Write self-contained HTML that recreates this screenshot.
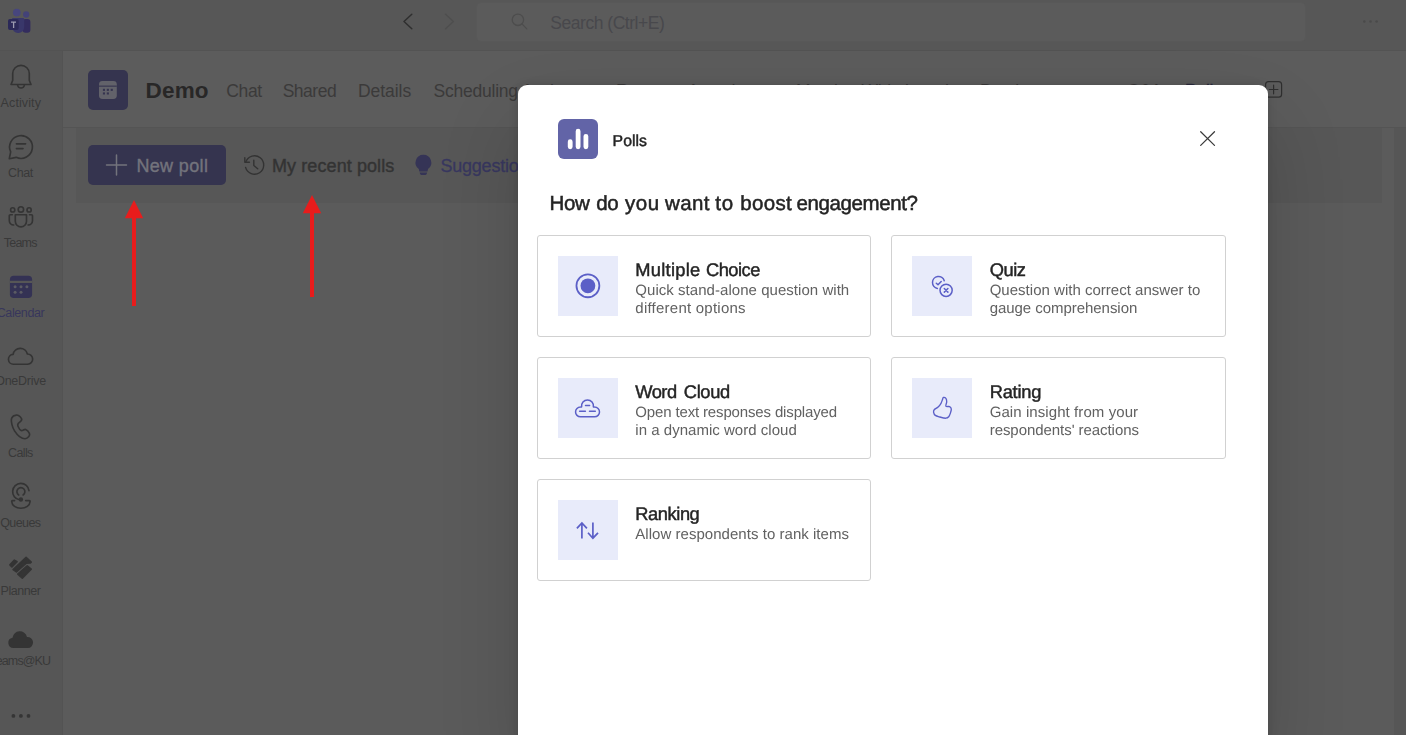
<!DOCTYPE html>
<html>
<head>
<meta charset="utf-8">
<title>Polls</title>
<style>
*{box-sizing:border-box;margin:0;padding:0}
html,body{width:1406px;height:735px;overflow:hidden}
body{position:relative;background:#5b5b5b;font-family:"Liberation Sans",sans-serif;color:#242424}
.abs{position:absolute}
.tx{position:absolute;white-space:nowrap;line-height:1}
svg{position:absolute;overflow:visible}
#topbar{left:0;top:0;width:1406px;height:51px;background:#575757;border-bottom:1px solid #535353}
#search{left:476px;top:2px;width:830px;height:40px;border-radius:5px;background:#5b5b5b;border:1px solid #585858}
#sidebar{left:0;top:51px;width:63px;height:684px;background:#565656;border-right:1px solid #535353}
.nav{position:absolute;left:-79.3px;width:200px;text-align:center;font-size:12.5px;line-height:1;color:#3b3b3b;white-space:nowrap}
#chead{left:63px;top:51px;width:1343px;height:77px;background:#5c5c5c;border-bottom:1px solid #545454}
#tile{left:88px;top:70px;width:40px;height:40px;border-radius:5px;background:#35344f}
#main{left:63px;top:128px;width:1343px;height:607px;background:#5b5b5b}
#strip{left:76px;top:128px;width:1306px;height:75px;background:#575757}
#rgut{left:1394px;top:128px;width:12px;height:607px;background:#565656}
#newpoll{left:88px;top:145px;width:138px;height:40px;border-radius:5px;background:#35344f}
#clip{left:0;top:0;width:518px;height:735px;overflow:hidden}
#modal{left:518px;top:85px;width:750px;height:660px;background:#fff;border-radius:9px;box-shadow:0 0 10px rgba(0,0,0,.13),0 40px 80px rgba(0,0,0,.16)}
.card{position:absolute;width:334px;height:102px;border:1px solid #d1d1d1;border-radius:3px;background:#fff}
.ic{position:absolute;width:60px;height:60px;background:#e8ebfa}
</style>
</head>
<body>
<div class="abs" id="topbar"></div>
<div class="abs" id="search"></div>
<div class="abs" id="sidebar"></div>
<div class="abs" id="chead"></div>
<div class="abs" id="main"></div>
<div class="abs" id="strip"></div>
<div class="abs" id="rgut"></div>
<div class="abs" id="tile"></div>
<div class="abs" id="newpoll"></div>
<svg width="1406" height="735" viewBox="0 0 1406 735" style="left:0;top:0">
<!-- teams logo -->
<g>
 <circle cx="26.200" cy="14.500" r="3.150" fill="#434278"/>
 <rect x="22.500" y="19" width="7.900" height="13.800" rx="3" fill="#332c5e"/>
 <circle cx="16.800" cy="12.600" r="3.850" fill="#47467e"/>
 <path d="M12.200 18.100h10.800a1.200 1.200 0 0 1 1.200 1.200v8a5.700 5.700 0 0 1-5.700 5.700h-.6a5.700 5.700 0 0 1-5.700-5.700z" fill="#39376a"/>
 <rect x="8" y="19" width="10.700" height="11" rx="1.900" fill="#2b2958"/>
 <path d="M11 22.100h5M13.600 22.100v5.800" stroke="#9c9cb0" stroke-width="1.300" fill="none"/>
</g>
<!-- back / forward chevrons -->
<path d="M411.8 14.2L404 21.5l7.8 7.3" stroke="#2f2f2f" stroke-width="1.5" fill="none" stroke-linecap="round" stroke-linejoin="round"/>
<path d="M445.6 14.2l7.8 7.3-7.8 7.3" stroke="#4e4e4e" stroke-width="1.5" fill="none" stroke-linecap="round" stroke-linejoin="round"/>
<!-- search icon -->
<g stroke="#4d4d4d" stroke-width="1.300" fill="none" stroke-linecap="round"><circle cx="517.900" cy="19.800" r="5.700"/><path d="M522 23.900l4.800 5"/></g>
<!-- top right dots -->
<g fill="#4a4a4a"><circle cx="1364.3" cy="21.4" r="1.25"/><circle cx="1370.5" cy="21.4" r="1.25"/><circle cx="1376.6" cy="21.4" r="1.25"/></g>
<!-- add tab icon -->
<g stroke="#2f2f2f" stroke-width="1.2" fill="none" stroke-linecap="round"><rect x="1265.600" y="81.600" width="16" height="15.600" rx="3"/><path d="M1273.6 85.2v8.6M1269.3 89.5h8.6"/></g>
<!-- calendar tile icon -->
<g>
 <rect x="99" y="81" width="17.8" height="18" rx="3.4" fill="#62626a"/>
 <rect x="99" y="85.6" width="17.8" height="1.1" fill="#35344f"/>
 <g fill="#35344f"><rect x="102.9" y="88.8" width="2.1" height="2.1"/><rect x="106.8" y="88.8" width="2.1" height="2.1"/><rect x="110.7" y="88.8" width="2.1" height="2.1"/><rect x="102.9" y="92.4" width="2.1" height="2.1"/><rect x="106.8" y="92.4" width="2.1" height="2.1"/></g>
</g>
<!-- sidebar icons -->
<g stroke="#343434" stroke-width="1.65" fill="none" stroke-linecap="round" stroke-linejoin="round">
 <!-- bell -->
 <path d="M11 84.5L12.7 80.4V73.6a8.3 8.3 0 0 1 16.6 0v6.8L31 84.5z"/>
 <path d="M17.6 84.8a3.4 3.2 0 0 0 6.8 0"/>
 <!-- chat -->
 <path d="M16.18 157.33A11.4 11.4 0 1 0 10.67 151.82L9.3 158.7z"/>
 <path d="M16.4 143.8h9.2M16.4 148.6h6.6"/>
 <!-- teams -->
 <circle cx="20.9" cy="209.4" r="2.7"/><circle cx="12.7" cy="209.9" r="2.1"/><circle cx="29.1" cy="209.9" r="2.1"/>
 <path d="M15.3 214.7h11.2v6.6a5.6 5.6 0 0 1-11.2 0z"/>
 <path d="M12.3 214.7h-1.9a1.1 1.1 0 0 0-1.1 1.1v4.6a4.6 4.6 0 0 0 4.4 4.6"/>
 <path d="M29.5 214.7h1.9a1.1 1.1 0 0 1 1.1 1.1v4.6a4.6 4.6 0 0 1-4.4 4.6"/>
 <!-- onedrive cloud -->
 <path d="M13.6 364.2a4.9 4.9 0 0 1-.5-9.8a7.3 7.3 0 0 1 14.3-.4a5.1 5.1 0 0 1 .3 10.2z"/>
 <!-- queues -->
 <path d="M29 490.7a8.2 8.2 0 1 0-9.6 9"/>
 <path d="M18.7 495a4 4 0 1 1 4.4 0"/>
 <path d="M14.6 500.6h-2.100a.8 .8 0 0 0-.8 .9c.2 3.900 4.200 6.700 9.200 6.700s9-2.800 9.200-6.700a.8 .8 0 0 0-.8-.9h-3.600"/>
</g>
<circle cx="20.9" cy="499.5" r="2.2" fill="#343434"/>
<!-- calls -->
<path d="M11.70 418.06C12.42 416.47 14.87 415.25 16.32 415.07C17.77 414.88 19.54 416.11 20.40 416.97C21.26 417.83 21.85 419.15 21.49 420.23C21.13 421.32 18.82 422.50 18.23 423.50C17.64 424.50 17.46 425.04 17.95 426.22C18.45 427.40 19.95 430.03 21.22 430.57C22.49 431.12 24.21 429.03 25.57 429.48C26.93 429.94 28.84 432.11 29.38 433.29C29.92 434.47 29.56 435.65 28.84 436.56C28.11 437.46 26.57 438.73 25.03 438.73C23.49 438.73 21.31 437.83 19.59 436.56C17.86 435.29 15.96 433.11 14.69 431.12C13.42 429.12 12.47 426.76 11.97 424.59C11.47 422.41 10.97 419.64 11.70 418.06Z" stroke="#343434" stroke-width="1.65" fill="none" stroke-linejoin="round"/>
<!-- calendar (selected) -->
<g>
 <rect x="9.900" y="275.800" width="22.200" height="22.200" rx="3.800" fill="#343254"/>
 <rect x="9.900" y="280.800" width="22.200" height="2.200" fill="#565656"/>
 <g fill="#5b5b63"><circle cx="15.100" cy="286.800" r="1.500"/><circle cx="21" cy="286.800" r="1.500"/><circle cx="26.900" cy="286.800" r="1.500"/><circle cx="15.100" cy="292.300" r="1.500"/><circle cx="21" cy="292.300" r="1.500"/></g>
</g>
<!-- planner -->
<g fill="#343434" stroke="#343434" stroke-width="1.6" stroke-linejoin="round">
 <path d="M9.900 564.900L14.400 560.100L17.100 561.600L11.900 567z"/>
 <path d="M13.100 569.500L26.100 557.300L31.200 562.100L30.400 562.900L26.300 563.100L16.400 571.900z"/>
 <path d="M17.800 574.100L27.200 565.800L31.200 569.200L22.300 578.100z"/>
</g>
<!-- filled cloud -->
<path d="M13.4 648.1a5.2 5.2 0 0 1-.9-10.3a7.4 7.4 0 0 1 14.5-.9a5.6 5.6 0 0 1 .9 11.2z" fill="#343434"/>
<!-- sidebar dots -->
<g fill="#353535"><circle cx="13.4" cy="715.9" r="1.9"/><circle cx="20.9" cy="715.9" r="1.9"/><circle cx="28.5" cy="715.9" r="1.9"/></g>
<!-- new poll plus -->
<path d="M116.5 155v20M106.5 165h20" stroke="#73737c" stroke-width="1.5" stroke-linecap="round" fill="none"/>
<!-- history icon -->
<g stroke="#333" stroke-width="1.400" fill="none" stroke-linecap="round" stroke-linejoin="round">
 <path d="M245.850 161.850A9.200 9.200 0 1 1 245.600 167.400"/>
 <path d="M244.800 157.600v4.600h4.600"/>
 <path d="M253.800 160.200v5.300l3.900 3.300"/>
</g>
<!-- lightbulb -->
<g fill="#353456">
 <path d="M423.4 154.8a7.9 7.9 0 0 1 4.6 14.3l-.5 2.4h-8.2l-.5-2.4a7.9 7.9 0 0 1 4.6-14.3z"/>
 <path d="M419.7 172.4h7.4l-.3 1.4a1.4 1.4 0 0 1-1.4 1.1h-4a1.4 1.4 0 0 1-1.4-1.1z"/>
</g>
</svg>
<span class="tx" id="srch" style="left:550.3px;top:15.39px;font-size:17.5px;color:#48484c;letter-spacing:-0.470px;">Search (Ctrl+E)</span>
<span class="tx" id="demo" style="left:145.6px;top:79.85px;font-size:22.5px;color:#282727;letter-spacing:0.161px;font-weight:bold;">Demo</span>
<span class="tx" id="tb1" style="left:226.2px;top:82.69px;font-size:17.5px;color:#3b3a3a;letter-spacing:-0.323px;">Chat</span>
<span class="tx" id="tb2" style="left:282.7px;top:82.69px;font-size:17.5px;color:#3b3a3a;letter-spacing:-0.487px;">Shared</span>
<span class="tx" id="tb3" style="left:358.0px;top:82.69px;font-size:17.5px;color:#3b3a3a;letter-spacing:-0.050px;">Details</span>
<span class="tx" id="tb4" style="left:433.6px;top:82.69px;font-size:17.5px;color:#3b3a3a;letter-spacing:-0.237px;">Scheduling Assistant</span>
<span class="tx" id="tb5" style="left:616.0px;top:82.69px;font-size:17.5px;color:#3b3a3a;letter-spacing:-0.900px;">Recap</span>
<span class="tx" id="tb6" style="left:687.5px;top:82.69px;font-size:17.5px;color:#3b3a3a;letter-spacing:-0.505px;">Attendance</span>
<span class="tx" id="tb7" style="left:796.0px;top:82.69px;font-size:17.5px;color:#3b3a3a;letter-spacing:-0.213px;">Meeting Whiteboard</span>
<span class="tx" id="tb8" style="left:980.0px;top:82.69px;font-size:17.5px;color:#3b3a3a;letter-spacing:-0.425px;">Breakout rooms</span>
<span class="tx" id="tb9" style="left:1127.0px;top:82.69px;font-size:17.5px;color:#3b3a3a;letter-spacing:-0.900px;">Q&amp;A</span>
<span class="tx" id="tb10" style="left:1185.0px;top:82.69px;font-size:17.5px;color:#2b2a3c;letter-spacing:-0.234px;-webkit-text-stroke:0.4px #2b2a3c;">Polls</span>
<span class="tx" id="np" style="left:136.4px;top:157.46px;font-size:18px;color:#73737c;letter-spacing:0.353px;-webkit-text-stroke:0.4px #73737c;">New poll</span>
<span class="tx" id="mrp" style="left:272.0px;top:157.46px;font-size:18px;color:#333333;letter-spacing:0.090px;-webkit-text-stroke:0.4px #333333;">My recent polls</span>
<span class="tx" id="sug" style="left:440.4px;top:157.46px;font-size:18px;color:#38375f;letter-spacing:-0.208px;-webkit-text-stroke:0.3px #38375f;">Suggestions</span>
<span class="tx" id="nv0" style="left:0.6px;top:96.82px;font-size:12.5px;color:#393939;letter-spacing:0.101px;">Activity</span>
<span class="tx" id="nv1" style="left:8.0px;top:166.82px;font-size:12.5px;color:#393939;letter-spacing:-0.369px;">Chat</span>
<span class="tx" id="nv2" style="left:3.8px;top:236.82px;font-size:12.5px;color:#393939;letter-spacing:-0.782px;">Teams</span>
<span class="tx" id="nv3" style="left:-3.3px;top:306.82px;font-size:12.5px;color:#38365c;letter-spacing:-0.391px;">Calendar</span>
<span class="tx" id="nv4" style="left:-4.8px;top:374.82px;font-size:12.5px;color:#393939;letter-spacing:-0.257px;">OneDrive</span>
<span class="tx" id="nv5" style="left:8.0px;top:446.82px;font-size:12.5px;color:#393939;letter-spacing:-0.624px;">Calls</span>
<span class="tx" id="nv6" style="left:0.2px;top:516.82px;font-size:12.5px;color:#393939;letter-spacing:-0.576px;">Queues</span>
<span class="tx" id="nv7" style="left:0.6px;top:584.82px;font-size:12.5px;color:#393939;letter-spacing:-0.466px;">Planner</span>
<span class="tx" id="nv8" style="left:-9.7px;top:655.02px;font-size:12.5px;color:#393939;letter-spacing:-0.868px;">Teams@KU</span>
<div class="abs" id="modal"></div>
<div class="abs" style="left:558px;top:119px;width:40px;height:40px;border-radius:6px;background:#6264a7"></div>
<svg width="40" height="40" viewBox="0 0 40 40" style="left:558px;top:119px"><g stroke="#fff" stroke-width="4.8" stroke-linecap="round"><path d="M12.2 22.700v5.100M20.100 12.200v15.600M27.900 17.300v10.500"/></g></svg>
<svg style="left:1198px;top:129px" width="20" height="20" viewBox="0 0 20 20"><path d="M2.700 2.700L16.500 16.400M16.500 2.700L2.700 16.400" stroke="#3a3a3a" stroke-width="1.25" stroke-linecap="round" fill="none"/></svg>
<div class="card" style="left:537px;top:235px;width:334px"></div>
<div class="ic" style="left:558px;top:256px"><svg width="60" height="60" viewBox="0 0 60 60"><circle cx="29.9" cy="29.8" r="11.45" fill="none" stroke="#5b5fc7" stroke-width="1.8"/><circle cx="29.9" cy="29.8" r="7.4" fill="#5b5fc7"/></svg></div>
<div class="card" style="left:891px;top:235px;width:335px"></div>
<div class="ic" style="left:912px;top:256px"><svg width="60" height="60" viewBox="0 0 60 60"><g fill="none" stroke="#5b5fc7" stroke-width="1.5" stroke-linecap="round" stroke-linejoin="round"><path d="M32.240 24.750A6 6 0 1 0 25.360 32.390"/><path d="M24.300 27.300L26 28.800L29.200 25.500"/><circle cx="34.100" cy="34.300" r="6.100"/><path d="M32.300 32.500l3.600 3.600M35.900 32.500l-3.600 3.600"/></g></svg></div>
<div class="card" style="left:537px;top:357px;width:334px"></div>
<div class="ic" style="left:558px;top:378px"><svg width="60" height="60" viewBox="0 0 60 60"><g fill="none" stroke="#5b5fc7" stroke-width="1.5" stroke-linecap="round" stroke-linejoin="round"><path d="M22.450 38.800A4.900 4.900 0 0 1 22.450 29L23.630 28.900A5.950 5.950 0 1 1 35.370 28.900L36.600 29A4.900 4.900 0 0 1 36.600 38.800Z"/><path d="M27.500 27.600h4.100M21.600 33.200h5.800M31.500 33.200h5.800"/></g></svg></div>
<div class="card" style="left:891px;top:357px;width:335px"></div>
<div class="ic" style="left:912px;top:378px"><svg width="60" height="60" viewBox="0 0 60 60"><path d="M31.40 19.40C31.95 19.27 33.35 19.68 33.90 20.40C34.45 21.12 34.70 22.40 34.70 23.70C34.70 25.00 33.42 27.38 33.90 28.20C34.38 29.02 36.70 28.13 37.60 28.60C38.50 29.07 39.17 29.92 39.30 31.00C39.43 32.08 38.83 33.80 38.40 35.10C37.97 36.40 37.45 37.95 36.70 38.80C35.95 39.65 35.38 40.17 33.90 40.20C32.42 40.23 29.57 39.47 27.80 39.00C26.03 38.53 24.33 38.18 23.30 37.40C22.27 36.62 21.78 35.23 21.60 34.30C21.42 33.37 21.45 32.68 22.20 31.80C22.95 30.92 24.97 30.08 26.10 29.00C27.23 27.92 28.25 26.60 29.00 25.30C29.75 24.00 30.20 22.18 30.60 21.20C31.00 20.22 30.85 19.53 31.40 19.40Z" fill="none" stroke="#5b5fc7" stroke-width="1.35" stroke-linejoin="round"/></svg></div>
<div class="card" style="left:537px;top:479px;width:334px"></div>
<div class="ic" style="left:558px;top:500px"><svg width="60" height="60" viewBox="0 0 60 60"><g fill="none" stroke="#5b5fc7" stroke-width="1.7" stroke-linejoin="miter"><path d="M23.900 38.500V23M18.900 28.400l5-5.500l5 5.500"/><path d="M34.900 22.400v15.400M30 32.800l4.900 5.400l5.100-5.400"/></g></svg></div>
<div id="mtx" style="position:absolute;left:0;top:0;width:1406px;height:735px;will-change:transform">
<span class="tx" id="polls" style="left:612.6px;top:134.13px;font-size:15.8px;color:#242424;letter-spacing:0.037px;-webkit-text-stroke:0.45px #242424;text-rendering:geometricPrecision;">Polls</span>
<span class="tx" id="h10" style="left:549.4px;top:194.35px;font-size:20.5px;color:#242424;letter-spacing:-0.308px;-webkit-text-stroke:0.5px #242424;text-rendering:geometricPrecision;">How</span>
<span class="tx" id="h11" style="left:596.2px;top:194.35px;font-size:20.5px;color:#242424;letter-spacing:-0.312px;-webkit-text-stroke:0.5px #242424;text-rendering:geometricPrecision;">do</span>
<span class="tx" id="h12" style="left:624.9px;top:194.35px;font-size:20.5px;color:#242424;letter-spacing:0.569px;-webkit-text-stroke:0.5px #242424;text-rendering:geometricPrecision;">you</span>
<span class="tx" id="h13" style="left:665.1px;top:194.35px;font-size:20.5px;color:#242424;letter-spacing:0.362px;-webkit-text-stroke:0.5px #242424;text-rendering:geometricPrecision;">want</span>
<span class="tx" id="h14" style="left:715.2px;top:194.35px;font-size:20.5px;color:#242424;letter-spacing:0.900px;-webkit-text-stroke:0.5px #242424;text-rendering:geometricPrecision;">to</span>
<span class="tx" id="h15" style="left:740.2px;top:194.35px;font-size:20.5px;color:#242424;letter-spacing:0.336px;-webkit-text-stroke:0.5px #242424;text-rendering:geometricPrecision;">boost</span>
<span class="tx" id="h16" style="left:796.6px;top:194.35px;font-size:20.5px;color:#242424;letter-spacing:-0.399px;-webkit-text-stroke:0.5px #242424;text-rendering:geometricPrecision;">engagement?</span>
<span class="tx" id="c1t0" style="left:635.3px;top:260.91px;font-size:18.3px;color:#242424;letter-spacing:0.271px;-webkit-text-stroke:0.45px #242424;text-rendering:geometricPrecision;">Multiple</span>
<span class="tx" id="c1t1" style="left:706.0px;top:260.91px;font-size:18.3px;color:#242424;letter-spacing:-0.521px;-webkit-text-stroke:0.45px #242424;text-rendering:geometricPrecision;">Choice</span>
<span class="tx" id="c1d0" style="left:635.3px;top:282.80px;font-size:15px;color:#616161;letter-spacing:0.043px;text-rendering:geometricPrecision;">Quick stand-alone question with</span>
<span class="tx" id="c1d1" style="left:635.3px;top:300.80px;font-size:15px;color:#616161;letter-spacing:0.239px;text-rendering:geometricPrecision;">different options</span>
<span class="tx" id="c2t" style="left:989.7px;top:260.91px;font-size:18.3px;color:#242424;letter-spacing:-0.431px;-webkit-text-stroke:0.45px #242424;text-rendering:geometricPrecision;">Quiz</span>
<span class="tx" id="c2d0" style="left:989.7px;top:282.80px;font-size:15px;color:#616161;letter-spacing:0.017px;text-rendering:geometricPrecision;">Question with correct answer to</span>
<span class="tx" id="c2d1" style="left:989.7px;top:300.80px;font-size:15px;color:#616161;letter-spacing:-0.047px;text-rendering:geometricPrecision;">gauge comprehension</span>
<span class="tx" id="c3t0" style="left:635.3px;top:382.91px;font-size:18.3px;color:#242424;letter-spacing:-0.520px;-webkit-text-stroke:0.45px #242424;text-rendering:geometricPrecision;">Word</span>
<span class="tx" id="c3t1" style="left:683.8px;top:382.91px;font-size:18.3px;color:#242424;letter-spacing:-0.366px;-webkit-text-stroke:0.45px #242424;text-rendering:geometricPrecision;">Cloud</span>
<span class="tx" id="c3d0" style="left:635.3px;top:404.80px;font-size:15px;color:#616161;letter-spacing:-0.149px;text-rendering:geometricPrecision;">Open text responses displayed</span>
<span class="tx" id="c3d1" style="left:635.3px;top:422.80px;font-size:15px;color:#616161;letter-spacing:0.026px;text-rendering:geometricPrecision;">in a dynamic word cloud</span>
<span class="tx" id="c4t" style="left:989.7px;top:382.91px;font-size:18.3px;color:#242424;letter-spacing:-0.232px;-webkit-text-stroke:0.45px #242424;text-rendering:geometricPrecision;">Rating</span>
<span class="tx" id="c4d0" style="left:989.7px;top:404.80px;font-size:15px;color:#616161;letter-spacing:0.079px;text-rendering:geometricPrecision;">Gain insight from your</span>
<span class="tx" id="c4d1" style="left:989.7px;top:422.80px;font-size:15px;color:#616161;letter-spacing:-0.056px;text-rendering:geometricPrecision;">respondents' reactions</span>
<span class="tx" id="c5t" style="left:635.3px;top:504.91px;font-size:18.3px;color:#242424;letter-spacing:-0.430px;-webkit-text-stroke:0.45px #242424;text-rendering:geometricPrecision;">Ranking</span>
<span class="tx" id="c5d0" style="left:635.3px;top:526.80px;font-size:15px;color:#616161;letter-spacing:0.036px;text-rendering:geometricPrecision;">Allow respondents to rank items</span>
</div>
<svg width="1406" height="735" viewBox="0 0 1406 735" style="left:0;top:0">
<g fill="#e81c1c">
 <rect x="132" y="214" width="4" height="92"/>
 <path d="M134 200l9.2 18.3h-18.4z"/>
 <rect x="310" y="209" width="4" height="88"/>
 <path d="M312 195l9.2 18.3h-18.4z"/>
</g>
</svg>
</body>
</html>
